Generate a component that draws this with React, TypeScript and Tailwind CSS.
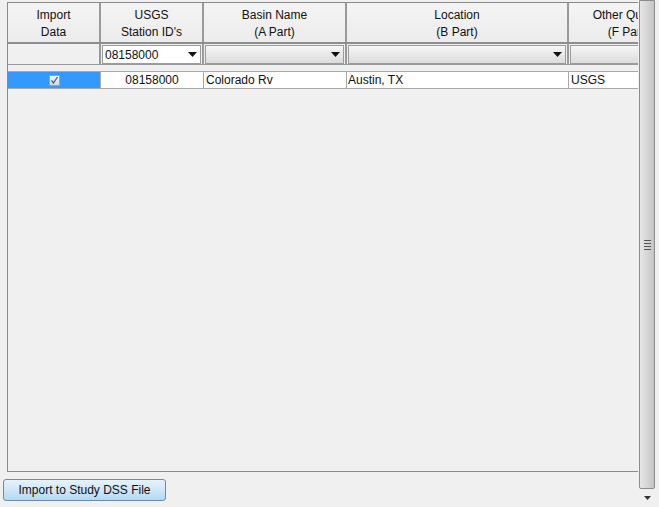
const cols = [
  { w: 'w-[93px]', top: 'Import', bottom: 'Data' },
  { w: 'w-[103px]', top: 'USGS', bottom: "Station ID's" },
  { w: 'w-[143px]', top: 'Basin Name', bottom: '(A Part)' },
  { w: 'w-[222px]', top: 'Location', bottom: '(B Part)' },
  { w: 'w-[120px]', top: 'Other Quality', bottom: '(F Part)' },
];

function Arrow() {
  return (
    <svg width="9" height="5" viewBox="0 0 9 5" className="shrink-0">
      <path d="M0 0h9L4.5 5z" fill="#111" />
    </svg>
  );
}

function Combo({ value, white }: { value?: string; white?: boolean }) {
  return (
    <div
      className={`mx-[1px] my-[1px] h-[19px] flex items-center justify-between pl-[2px] pr-[3px] border border-[#9c9c9c] ${
        white ? 'bg-white' : 'bg-gradient-to-b from-[#f6f6f6] to-[#dcdcdc]'
      }`}
    >
      <span>{value}</span>
      <Arrow />
    </div>
  );
}

function Scrollbar() {
  return (
    <div className="w-[21px] h-full flex flex-col bg-[#f0f0f0]">
      <div className="flex-1 ml-[1px] mr-[4px] border border-[#8c8c8c] rounded-b-[2px] bg-gradient-to-r from-[#e6e6e6] via-[#d6d6d6] to-[#c4c4c4] flex items-center justify-center">
        <div className="flex flex-col gap-[2px]">
          <div className="w-[7px] h-[1px] bg-[#555]" />
          <div className="w-[7px] h-[1px] bg-[#555]" />
          <div className="w-[7px] h-[1px] bg-[#555]" />
          <div className="w-[7px] h-[1px] bg-[#555]" />
        </div>
      </div>
      <div className="h-[18px] flex items-center justify-center pr-[3px]">
        <svg width="7" height="4" viewBox="0 0 7 4">
          <path d="M0 0h7L3.5 4z" fill="#333" />
        </svg>
      </div>
    </div>
  );
}

export default function App() {
  return (
    <div
      className="w-[659px] h-[507px] bg-[#f0f0f0] flex overflow-hidden text-[12px] text-[#111]"
      style={{ fontFamily: '"Liberation Sans", Arial, sans-serif' }}
    >
      <div className="w-[638px] flex flex-col">
        <div className="ml-[7px] mt-[2px] h-[470px] border-l border-t border-b border-[#8a8a8a] flex flex-col overflow-hidden">
          <div className="flex h-[41px] border-b-2 border-[#8e8e8e]">
            {cols.map((c) => (
              <div
                key={c.top}
                className={`${c.w} shrink-0 border-r-2 border-[#9a9a9a] bg-gradient-to-b from-[#f4f4f4] to-[#ececec] flex flex-col items-center justify-center pt-[3px] leading-[17px] whitespace-nowrap`}
              >
                <span>{c.top}</span>
                <span>{c.bottom}</span>
              </div>
            ))}
          </div>
          <div className="flex h-[21px] border-b border-[#9a9a9a]">
            <div className="w-[93px] shrink-0 border-r-2 border-[#9a9a9a]" />
            <div className="w-[103px] shrink-0 border-r-2 border-[#9a9a9a]">
              <Combo value="08158000" white />
            </div>
            <div className="w-[143px] shrink-0 border-r-2 border-[#9a9a9a]">
              <Combo />
            </div>
            <div className="w-[222px] shrink-0 border-r-2 border-[#9a9a9a]">
              <Combo />
            </div>
            <div className="w-[120px] shrink-0">
              <Combo />
            </div>
          </div>
          <div className="mt-[6px] flex h-[18px] border-t border-b border-[#a8a8a8] bg-white">
            <div className="w-[93px] shrink-0 bg-[#3399ff] flex items-center justify-center border-r border-[#a8a8a8]">
              <div className="w-[11px] h-[11px] border border-[#8fa4c0] bg-gradient-to-b from-[#f4f6fa] to-[#cfd8e6] flex items-center justify-center">
                <svg width="9" height="9" viewBox="0 0 9 9">
                  <path d="M1.5 4.5l2 2.5 4-6" stroke="#4a5a75" strokeWidth="1.3" fill="none" />
                </svg>
              </div>
            </div>
            <div className="w-[103px] shrink-0 border-r border-[#a8a8a8] flex items-center justify-center">
              08158000
            </div>
            <div className="w-[143px] shrink-0 border-r border-[#a8a8a8] flex items-center pl-[2px]">
              Colorado Rv
            </div>
            <div className="w-[222px] shrink-0 border-r border-[#a8a8a8] flex items-center pl-[1px]">
              Austin, TX
            </div>
            <div className="w-[120px] shrink-0 flex items-center pl-[2px]">USGS</div>
          </div>
        </div>
        <div className="ml-[3px] mt-[7px]">
          <button className="w-[163px] h-[22px] rounded-[3px] border border-[#6f8aa6] bg-gradient-to-b from-[#e6f3fc] via-[#cfe7f8] to-[#b3d8f3] text-[12px] text-[#111]">
            Import to Study DSS File
          </button>
        </div>
      </div>
      <Scrollbar />
    </div>
  );
}
